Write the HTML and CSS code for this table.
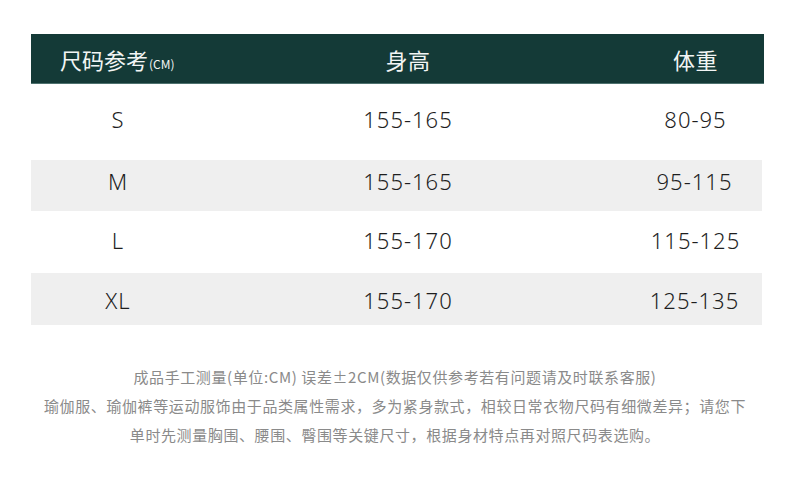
FILE: index.html
```html
<!DOCTYPE html>
<html lang="zh-CN">
<head>
<meta charset="utf-8">
<title>尺码参考</title>
<link rel="stylesheet" href="styles.css">
</head>
<body>
<main class="page">
  <section class="table">
    <div class="row head">
      <div class="cell c1 title">尺码参考<span class="unit">(CM)</span></div>
      <div class="cell c2">身高</div>
      <div class="cell c3">体重</div>
    </div>
    <div class="row r-s">
      <div class="cell c1">S</div>
      <div class="cell c2">155-165</div>
      <div class="cell c3">80-95</div>
    </div>
    <div class="row r-m alt">
      <div class="cell c1">M</div>
      <div class="cell c2">155-165</div>
      <div class="cell c3">95-115</div>
    </div>
    <div class="row r-l">
      <div class="cell c1">L</div>
      <div class="cell c2">155-170</div>
      <div class="cell c3">115-125</div>
    </div>
    <div class="row r-xl alt">
      <div class="cell c1">XL</div>
      <div class="cell c2">155-170</div>
      <div class="cell c3">125-135</div>
    </div>
  </section>
  <section class="notes">
    <p>成品手工测量(单位:CM) 误差±2CM(数据仅供参考若有问题请及时联系客服)</p>
    <p>瑜伽服、瑜伽裤等运动服饰由于品类属性需求，多为紧身款式，相较日常衣物尺码有细微差异；请您下</p>
    <p>单时先测量胸围、腰围、臀围等关键尺寸，根据身材特点再对照尺码表选购。</p>
  </section>
</main>
</body>
</html>
```

FILE: styles.css
```css
* { box-sizing: border-box; }

html, body {
  margin: 0;
  padding: 0;
  background: #ffffff;
}

body {
  font-family: "Noto Sans", "Noto Sans CJK SC", sans-serif;
  color: #1e1e1e;
}

.page {
  width: 790px;
  padding-top: 34px;
}

.table {
  margin-left: 31px;
  width: 733px;
}

.row {
  display: grid;
  grid-template-columns: 174px 406px 1fr;
  align-items: center;
}

.cell {
  text-align: center;
  font-size: 22px;
  font-weight: 300;
  letter-spacing: 1px;
  line-height: 1;
}

.c3 { padding-left: 16px; }

.head {
  height: 50px;
  background: #143a37;
  border-bottom: 1px solid #4d716e;
  color: #f2f5f4;
}

.head .cell {
  font-family: "Noto Sans CJK SC", sans-serif;
  font-size: 22px;
  font-weight: 400;
  letter-spacing: 0.5px;
}

.head .title {
  text-align: left;
  padding-left: 29px;
  letter-spacing: 0;
}

.unit {
  font-size: 12px;
  margin-left: 1px;
}

.r-s { height: 76px; padding-bottom: 6px; }
.r-m { height: 51px; padding-bottom: 10px; }
.r-l { height: 62px; padding-bottom: 4px; }
.r-xl { height: 52px; padding-top: 2px; }

.alt {
  background: #efefef;
  width: 731px;
}

.notes {
  margin-top: 37px;
  text-align: center;
  font-family: "Noto Sans CJK SC", sans-serif;
  color: #8a8a8a;
  font-size: 15px;
  letter-spacing: 0.6px;
  line-height: 29px;
}

.notes p {
  margin: 0;
}
```
